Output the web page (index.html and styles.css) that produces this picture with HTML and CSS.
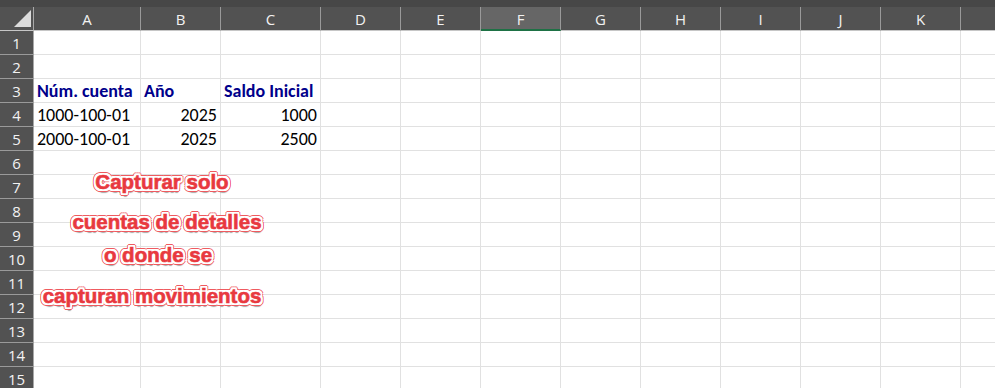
FILE: index.html
```html
<!DOCTYPE html>
<html lang="es">
<head>
<meta charset="utf-8">
<link rel="stylesheet" href="styles.css">
</head>
<body>
<div class="topstrip"></div>
<div class="sheet">
  <div class="grid" id="grid"></div>
  <div class="note">
    <p class="l1">Capturar solo</p>
    <p class="l2">cuentas de detalles</p>
    <p class="l3">o donde se</p>
    <p class="l4">capturan movimientos</p>
  </div>
</div>
<script src="app.js"></script>
</body>
</html>
```

FILE: app.js
```js
const cols = ["A","B","C","D","E","F","G","H","I","J","K",""];
const data = {
  3: [["Núm. cuenta","hdr"],["Año","hdr"],["Saldo Inicial","hdr"]],
  4: [["1000-100-01",""],["2025","num"],["1000","num"]],
  5: [["2000-100-01",""],["2025","num"],["2500","num"]]
};
const g = document.getElementById("grid");
function el(cls, txt) {
  const d = document.createElement("div");
  d.className = cls;
  if (txt !== undefined) d.textContent = txt;
  g.appendChild(d);
  return d;
}
el("corner").innerHTML = '<svg width="17" height="17" viewBox="0 0 17 17"><polygon points="17,0 17,17 0,17" fill="#dcdcdc"/></svg>';
cols.forEach(c => el("colhead" + (c === "F" ? " sel" : ""), c));
for (let r = 1; r <= 15; r++) {
  el("rowhead", String(r));
  cols.forEach((c, i) => {
    const row = data[r];
    if (row && row[i]) {
      el("cell " + row[i][1], row[i][0]);
    } else {
      el("cell");
    }
  });
}
```

FILE: styles.css
```css
html, body {
  margin: 0;
  padding: 0;
  background: #ffffff;
  overflow: hidden;
}
.topstrip {
  height: 7px;
  background: #474747;
}
.sheet {
  position: relative;
}
.grid {
  display: grid;
  grid-template-columns: 34px 107px 80px 100px repeat(8, 80px) 80px;
  grid-auto-rows: 24px;
}
.corner {
  background: #525252;
  border-right: 1px solid #a8a8a8;
  border-bottom: 1px solid #c6c6c6;
  box-sizing: border-box;
  display: flex;
  align-items: flex-start;
  padding: 3px 0 0 14px;
}
.colhead {
  background: #525252;
  color: #f2f2f2;
  font-family: "Open Sans", "Noto Sans", sans-serif;
  font-size: 15px;
  display: flex;
  align-items: center;
  justify-content: center;
  box-sizing: border-box;
  border-right: 1px solid #9a9a9a;
  border-bottom: 1px solid #c6c6c6;
  padding-top: 1px;
}
.colhead.sel {
  background: #666666;
  border-bottom: 2px solid #1e7145;
}
.rowhead {
  background: #525252;
  color: #f2f2f2;
  font-family: "Open Sans", "Noto Sans", sans-serif;
  font-size: 15px;
  display: flex;
  align-items: center;
  justify-content: center;
  box-sizing: border-box;
  border-right: 1px solid #a8a8a8;
  border-bottom: 1px solid #9a9a9a;
  padding-top: 1px;
}
.cell {
  box-sizing: border-box;
  border-right: 1px solid #e1e1e1;
  border-bottom: 1px solid #e1e1e1;
  font-family: "Carlito", "Lato", "Liberation Sans", sans-serif;
  font-size: 18px;
  line-height: 20px;
  color: #000000;
  display: flex;
  align-items: flex-end;
  padding: 0 3px 1px 3px;
  white-space: nowrap;
  overflow: visible;
}
.cell.num {
  justify-content: flex-end;
}
.cell.hdr {
  font-weight: bold;
  color: #00008b;
}
.note {
  position: absolute;
  left: 0;
  top: 0;
  font-family: "Liberation Sans", Arial, sans-serif;
  font-weight: bold;
  font-size: 20.5px;
  line-height: 23px;
  color: #e8393f;
  text-align: center;
}
.note p {
  margin: 0;
  position: absolute;
  width: 300px;
  white-space: nowrap;
  -webkit-text-stroke: 0.6px #e8393f;
  text-shadow:
    -2px 0 0 #fff, 2px 0 0 #fff, 0 -2px 0 #fff, 0 2px 0 #fff,
    -1px -1px 0 #fff, 1px -1px 0 #fff, -1px 1px 0 #fff, 1px 1px 0 #fff,
    -2px -1px 0 #fff, 2px -1px 0 #fff, -2px 1px 0 #fff, 2px 1px 0 #fff,
    -1px -2px 0 #fff, 1px -2px 0 #fff, -1px 2px 0 #fff, 1px 2px 0 #fff,
    -2px -2px 0 #fff, 2px -2px 0 #fff, -2px 2px 0 #fff, 2px 2px 0 #fff,
    -3px 0 0 #ef5a5f, 3px 0 0 #ef5a5f, 0 -3px 0 #ef5a5f, 0 3px 0 #ef5a5f,
    -3px -2px 0 #ef5a5f, 3px -2px 0 #ef5a5f, -3px 2px 0 #ef5a5f, 3px 2px 0 #ef5a5f,
    -2px -3px 0 #ef5a5f, 2px -3px 0 #ef5a5f, -2px 3px 0 #ef5a5f, 2px 3px 0 #ef5a5f,
    1px 4px 1px rgba(0,0,0,0.35);
}
.note .l1 { top: 163px; left: 12px; }
.note .l2 { top: 203px; left: 17px; }
.note .l3 { top: 236px; left: 8px; }
.note .l4 { top: 277px; left: 2px; }
```
